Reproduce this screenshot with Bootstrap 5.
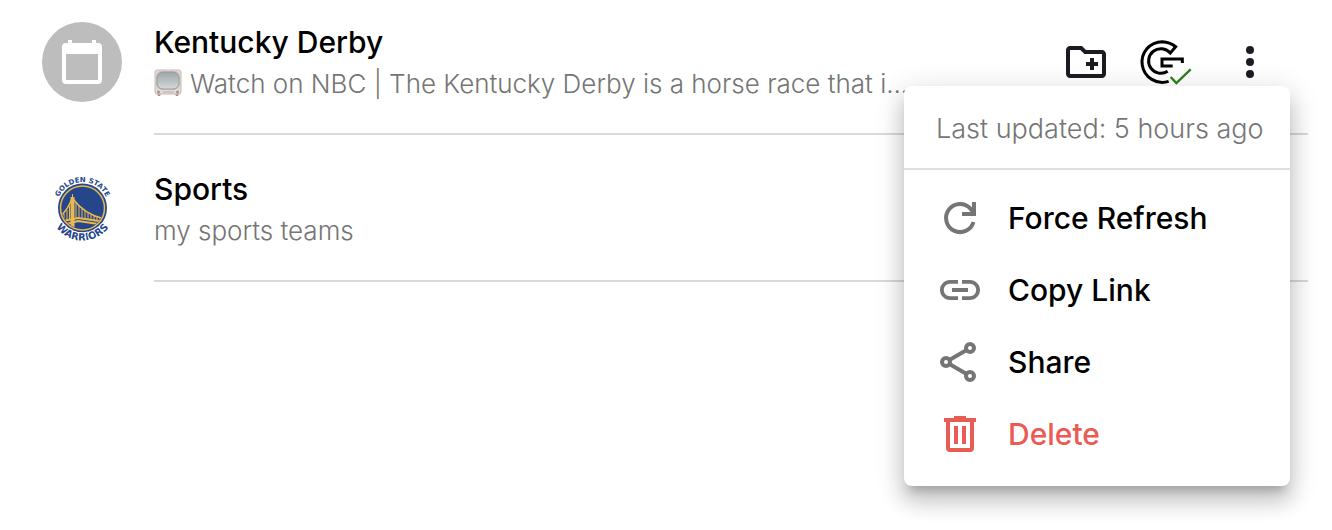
<!DOCTYPE html>
<html lang="en">
<head>
<meta charset="utf-8">
<meta name="viewport" content="width=device-width, initial-scale=1">
<title>Calendars</title>
<link href="https://cdn.jsdelivr.net/npm/bootstrap@5.3.0/dist/css/bootstrap.min.css" rel="stylesheet">
<style>
  body { font-family: Inter, "Liberation Sans", sans-serif; color: #000; background: #fff; }
  .entries { padding-top: 22px; }
  .entry { display: flex; gap: 32px; padding-left: 42px; padding-right: 24px; }
  .entry-avatar { width: 80px; height: 80px; flex: none; }
  .entry-main { border-bottom: 2px solid #d9d9d9; min-width: 0; padding-bottom: 29px; }
  .entry + .entry { padding-top: 34px; }
  .entry-title { font-size: 30px; line-height: 40px; font-weight: 500; margin: 0 0 2px; }
  .entry-note { font-size: 26px; line-height: 40px; font-weight: 300; color: #757575; margin: 0; white-space: nowrap; overflow: hidden; }
  .tv { margin: -6px 8px 0 0; }
  .icon-btn { border: 0; background: none; padding: 0; color: #1c1b22; display: block; line-height: 0; }
  .more-btn { width: 80px; text-align: center; }
  .actions { margin-right: 18px; padding-top: 16px; }
  .entry-menu { display: block; position: absolute; top: 48px; right: 0; width: 386px; padding: 0 0 16px; border: 0; border-radius: 8px;
    box-shadow: 0 10px 10px -6px rgba(0,0,0,.2), 0 16px 20px 2px rgba(0,0,0,.14), 0 6px 28px 4px rgba(0,0,0,.12); }
  .menu-head { font-size: 27px; line-height: 40px; font-weight: 300; color: #757575; padding: 23px 24px 19px 32px; margin-bottom: 12px; border-bottom: 2px solid #e0e0e0; white-space: nowrap; }
  .entry-menu .dropdown-item { display: flex; align-items: center; gap: 24px; padding: 12px 32px; font-size: 30px; line-height: 48px; font-weight: 500; color: #000; }
  .dropdown-item svg { color: #757575; flex: none; }
  .entry-menu .item-delete, .item-delete svg { color: #ea5b54; }
</style>
</head>
<body>
<main class="entries min-vh-100">
  <article class="entry">
    <svg class="entry-avatar" viewBox="0 0 80 80" aria-hidden="true">
      <circle cx="40" cy="40" r="40" fill="#bdbdbd"/>
      <path fill="#fff" fill-rule="evenodd" d="M26 18h4v3h20v-3h4v3h2a4 4 0 0 1 4 4v33a4 4 0 0 1-4 4H24a4 4 0 0 1-4-4V25a4 4 0 0 1 4-4h2zM24 32v26h32V32z"/>
    </svg>
    <div class="entry-main flex-grow-1 d-flex">
      <div class="entry-copy flex-grow-1 overflow-hidden">
        <h2 class="entry-title">Kentucky Derby</h2>
        <p class="entry-note"><svg class="tv align-middle" width="28" height="28" viewBox="0 0 28 28" role="img" aria-label="Television">
            <defs><linearGradient id="glass" x2="0" y2="1"><stop stop-color="#9ba5a7"/><stop offset="1" stop-color="#d5dadb"/></linearGradient></defs>
            <path fill="#a3948e" d="M3 25h4l-1 2H4zM21 25h4l-1 2h-2z"/>
            <rect x="1" y="1" width="26" height="24" rx="2" fill="#e6dad6" stroke="#cdb8b1"/>
            <rect x="2" y="2" width="24" height="19" rx="5" fill="#cdc8c5"/>
            <rect x="3" y="3" width="22" height="17" rx="6" fill="url(#glass)" stroke="#969d9e"/>
            <path stroke="#b9aeaa" d="M9 23h11"/><circle cx="4.500" cy="23" r="1.500" fill="#9b9795"/><circle cx="23.500" cy="23" r="1.500" fill="#9b9795"/>
          </svg>Watch on NBC | The Kentucky Derby is a horse race that i...</p>
      </div>
      <div class="actions d-flex align-items-start flex-shrink-0">
        <button class="icon-btn" type="button" aria-label="Add to folder">
          <svg width="48" height="48" viewBox="0 0 24 24" fill="currentColor"><path d="M20 6h-8l-2-2H4c-1.100 0-2 .9-2 2v12c0 1.100.9 2 2 2h16c1.100 0 2-.9 2-2V8c0-1.100-.9-2-2-2zm0 12H4V6h5.170l2 2H20v10zm-8-4h2v2h2v-2h2v-2h-2v-2h-2v2h-2z"/></svg>
        </button>
        <button class="icon-btn" type="button" aria-label="Synced with Google">
          <svg width="100" height="48" viewBox="180 24 300 144" fill="none" stroke-width="9">
            <path stroke="#000" d="M356 154A61 61 0 1 1 337 35Q359 36 377 50L361 69A37 37 0 1 0 353 124M397 99V87H336V108H368"/>
            <path stroke="#2e8018" stroke-width="7" d="M362 141L379 159L422 118"/>
          </svg>
        </button>
        <div class="dropdown">
          <button class="icon-btn more-btn" type="button" aria-label="More options" aria-expanded="true">
            <svg width="48" height="48" viewBox="0 0 24 24" fill="currentColor"><circle cx="12" cy="6" r="2"/><circle cx="12" cy="12" r="2"/><circle cx="12" cy="18" r="2"/></svg>
          </button>
          <div class="dropdown-menu show entry-menu">
            <div class="menu-head">Last updated: 5 hours ago</div>
            <button class="dropdown-item" type="button"><svg width="48" height="48" viewBox="0 0 24 24" fill="none" stroke="currentColor" stroke-width="2"><path d="M18.750 14A7 7 0 1 1 17 7.100L19 9.500M19 4V10H13"/></svg>Force Refresh</button>
            <button class="dropdown-item" type="button"><svg width="48" height="48" viewBox="0 0 24 24" fill="currentColor"><path d="M3.900 12c0-1.710 1.390-3.100 3.100-3.100h4V7H7c-2.760 0-5 2.240-5 5s2.240 5 5 5h4v-1.900H7c-1.710 0-3.100-1.390-3.100-3.100zM8 13h8v-2H8v2zm9-6h-4v1.900h4c1.710 0 3.100 1.390 3.100 3.100s-1.390 3.100-3.100 3.100h-4V17h4c2.760 0 5-2.240 5-5s-2.240-5-5-5z"/></svg>Copy Link</button>
            <button class="dropdown-item" type="button"><svg width="48" height="48" viewBox="0 0 24 24" fill="none" stroke="currentColor" stroke-width="2"><circle cx="5" cy="12" r="2"/><circle cx="17" cy="5" r="2"/><circle cx="17" cy="19" r="2"/><path d="M6.700 11l8.600-5M6.700 13l8.600 5"/></svg>Share</button>
            <button class="dropdown-item item-delete" type="button"><svg width="48" height="48" viewBox="0 0 24 24" fill="currentColor"><path fill-rule="evenodd" d="M9 3h6v1h5v2h-1v13a2 2 0 0 1-2 2H7a2 2 0 0 1-2-2V6H4V4h5zM7 6v13h10V6zM9 8h2v9H9zM13 8h2v9h-2z"/></svg>Delete</button>
          </div>
        </div>
      </div>
    </div>
  </article>

  <article class="entry">
    <svg class="entry-avatar" viewBox="0 0 80 80" role="img" aria-label="Golden State Warriors">
      <defs>
        <path id="arc-top" d="M14.500 39A26 26 0 0 1 66.500 39"/>
        <path id="arc-bottom" d="M8 39A32.500 32.500 0 0 0 73 39"/>
        <clipPath id="disc"><circle cx="40.500" cy="39" r="21"/></clipPath>
      </defs>
      <circle cx="40.500" cy="39" r="24.500" fill="#26468b"/>
      <circle cx="40.500" cy="39" r="22" fill="none" stroke="#e9b94d" stroke-width="1.500"/>
      <g clip-path="url(#disc)" stroke="#e9b94d" fill="none">
        <path stroke-width="2" d="M16 53L36 49L64 53M16 57L36 52L64 56"/>
        <path stroke-width="4" d="M30.500 28V64"/><path stroke-width="1" d="M30.500 25V30"/>
        <path stroke-width="1.500" d="M31 30Q43 46 63 50M30 30Q25 42 16 50"/>
        <path stroke-width="1" d="M19 48v6M22 45v8M25 41v11M27.500 37v14M34 34v16M37 37v13M40 40v10M43 42v8M46 44v7M49 45v6M52 47v5M55 48v4M58 49v4"/>
      </g>
      <g fill="#26468b" font-family="DejaVu Sans, sans-serif" font-weight="700" text-anchor="middle">
        <text font-size="7"><textPath href="#arc-top" startOffset="50%">GOLDEN STATE</textPath></text>
        <text font-size="10" stroke="#fff" stroke-width="2" paint-order="stroke"><textPath href="#arc-bottom" startOffset="50%">WARRIORS</textPath></text>
      </g>
    </svg>
    <div class="entry-main flex-grow-1">
      <h2 class="entry-title">Sports</h2>
      <p class="entry-note">my sports teams</p>
    </div>
  </article>
</main>
<script src="https://cdn.jsdelivr.net/npm/bootstrap@5.3.0/dist/js/bootstrap.bundle.min.js"></script>
</body>
</html>
